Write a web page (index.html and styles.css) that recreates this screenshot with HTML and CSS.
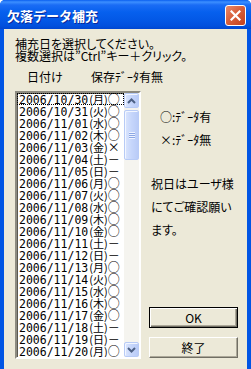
FILE: index.html
```html
<!DOCTYPE html>
<html lang="ja">
<head>
    <meta charset="UTF-8">
    <title>欠落データ補充</title>
    <link rel="stylesheet" href="styles.css">
</head>
<body>
    <div class="window">
        <div class="titlebar">
            <span class="title">欠落データ補充</span>
            <div class="close-btn">
                <svg width="11" height="11" viewBox="0 0 11 11"><path d="M1.5 1.5 L9.5 9.5 M9.5 1.5 L1.5 9.5" stroke="#fff" stroke-width="2.2" stroke-linecap="square"/></svg>
            </div>
        </div>

        <div class="client">
            <div class="intro">
                <div>補充日を選択してください。</div>
                <div>複数選択は”Ctrl”キー＋クリック。</div>
            </div>

            <div class="headers">
                <span class="h-date">日付け</span>
                <span>保存ﾃﾞｰﾀ有無</span>
            </div>

            <div class="main">
                <div class="listbox">
                    <ul class="items">
                        <li class="focused"><span class="dt">2006/10/30</span><span class="wd">(月)</span><span class="mk">○</span></li>
                        <li><span class="dt">2006/10/31</span><span class="wd">(火)</span><span class="mk">○</span></li>
                        <li><span class="dt">2006/11/01</span><span class="wd">(水)</span><span class="mk">○</span></li>
                        <li><span class="dt">2006/11/02</span><span class="wd">(木)</span><span class="mk">○</span></li>
                        <li><span class="dt">2006/11/03</span><span class="wd">(金)</span><span class="mk">×</span></li>
                        <li><span class="dt">2006/11/04</span><span class="wd">(土)</span><span class="mk">－</span></li>
                        <li><span class="dt">2006/11/05</span><span class="wd">(日)</span><span class="mk">－</span></li>
                        <li><span class="dt">2006/11/06</span><span class="wd">(月)</span><span class="mk">○</span></li>
                        <li><span class="dt">2006/11/07</span><span class="wd">(火)</span><span class="mk">○</span></li>
                        <li><span class="dt">2006/11/08</span><span class="wd">(水)</span><span class="mk">○</span></li>
                        <li><span class="dt">2006/11/09</span><span class="wd">(木)</span><span class="mk">○</span></li>
                        <li><span class="dt">2006/11/10</span><span class="wd">(金)</span><span class="mk">○</span></li>
                        <li><span class="dt">2006/11/11</span><span class="wd">(土)</span><span class="mk">－</span></li>
                        <li><span class="dt">2006/11/12</span><span class="wd">(日)</span><span class="mk">－</span></li>
                        <li><span class="dt">2006/11/13</span><span class="wd">(月)</span><span class="mk">○</span></li>
                        <li><span class="dt">2006/11/14</span><span class="wd">(火)</span><span class="mk">○</span></li>
                        <li><span class="dt">2006/11/15</span><span class="wd">(水)</span><span class="mk">○</span></li>
                        <li><span class="dt">2006/11/16</span><span class="wd">(木)</span><span class="mk">○</span></li>
                        <li><span class="dt">2006/11/17</span><span class="wd">(金)</span><span class="mk">○</span></li>
                        <li><span class="dt">2006/11/18</span><span class="wd">(土)</span><span class="mk">－</span></li>
                        <li><span class="dt">2006/11/19</span><span class="wd">(日)</span><span class="mk">－</span></li>
                        <li><span class="dt">2006/11/20</span><span class="wd">(月)</span><span class="mk">○</span></li>
                    </ul>
                    <div class="scrollbar">
                        <div class="sb-btn">
                            <svg width="9" height="6" viewBox="0 0 9 6"><path d="M1 5 L4.5 1.5 L8 5" fill="none" stroke="#4d6185" stroke-width="2"/></svg>
                        </div>
                        <div class="sb-thumb">
                            <div class="grip"></div>
                        </div>
                        <div class="sb-track"></div>
                        <div class="sb-btn">
                            <svg width="9" height="6" viewBox="0 0 9 6"><path d="M1 1 L4.5 4.5 L8 1" fill="none" stroke="#4d6185" stroke-width="2"/></svg>
                        </div>
                    </div>
                </div>

                <div class="side">
                    <div class="legend">
                        <div>○:ﾃﾞｰﾀ有</div>
                        <div>×:ﾃﾞｰﾀ無</div>
                    </div>
                    <div class="note">祝日はユーザ様<br>にてご確認願い<br>ます。</div>
                    <div class="buttons">
                        <button class="btn btn-default">OK</button>
                        <button class="btn">終了</button>
                    </div>
                </div>
            </div>
        </div>
    </div>
</body>
</html>
```

FILE: styles.css
```css
body {
    margin: 0;
    background: #fff;
    font-family: 'Noto Sans CJK JP', sans-serif;
    font-size: 12px;
    color: #000;
}
.window {
    width: 251px;
    height: 369px;
    background: #0155e4;
    border-radius: 5px 5px 0 0;
    display: flex;
    flex-direction: column;
    box-sizing: border-box;
    overflow: hidden;
}
.titlebar {
    height: 29px;
    flex: none;
    display: flex;
    align-items: center;
    padding: 0 5px 0 7px;
    background: linear-gradient(#0a5ff0 0, #3c8fff 2px, #1a6cf5 5px, #0660ee 12px, #0358e6 20px, #0150dd 26px, #0046d0 29px);
}
.title {
    color: #fff;
    font-weight: bold;
    font-size: 13px;
    line-height: 13px;
    margin-top: 1px;
    text-shadow: 1px 1px 0 #0a2a9a;
}
.close-btn {
    margin-left: auto;
    width: 19px;
    height: 19px;
    border: 1px solid #fff;
    border-radius: 3px;
    background: linear-gradient(135deg, #e98a6c 0%, #d8603c 45%, #c4401c 100%);
    display: flex;
    align-items: center;
    justify-content: center;
    margin-top: 1px;
}
.client {
    flex: 1;
    margin: 0 4px 4px 4px;
    background: #ece9d8;
    padding: 9px 9px 10px 11px;
    display: flex;
    flex-direction: column;
    font-feature-settings: "palt";
}
.intro {
    line-height: 12px;
}
.headers {
    margin-top: 9px;
    line-height: 12px;
    padding-left: 12px;
    display: flex;
}
.h-date {
    width: 64px;
}
.main {
    margin-top: 8px;
    flex: 1;
    display: flex;
    gap: 8px;
}
.listbox {
    width: 128px;
    box-sizing: border-box;
    border: 2px solid;
    border-color: #8d8b80 #fff #fff #8d8b80;
    box-shadow: inset 1px 1px 0 #5a5850;
    background: #fff;
    display: flex;
    overflow: hidden;
}
.items {
    list-style: none;
    margin: 0;
    padding: 0;
    flex: 1;
    overflow: hidden;
    font-feature-settings: normal;
}
.items li {
    height: 12px;
    line-height: 12px;
    white-space: nowrap;
    padding-left: 2px;
    box-sizing: border-box;
}
.items li.focused {
    outline: 1px dotted #000;
    outline-offset: -1px;
}
.dt {
    font-family: 'DejaVu Sans Mono', monospace;
    font-size: 11.5px;
}
.wd {
    font-size: 11px;
    margin-left: 1px;
}
.mk {
    font-size: 12px;
}
.scrollbar {
    width: 15px;
    flex: none;
    display: flex;
    flex-direction: column;
    background: #f5f4ef;
}
.sb-btn,
.sb-thumb {
    box-sizing: border-box;
    border: 1px solid #b8cbf6;
    border-radius: 2px;
    background: linear-gradient(90deg, #dbe5fd 0%, #c6d6fb 50%, #b9cbf7 100%);
    box-shadow: inset 1px 1px 0 #f2f6ff;
}
.sb-btn {
    height: 15px;
    display: flex;
    align-items: center;
    justify-content: center;
}
.sb-thumb {
    height: 50px;
    margin-top: 2px;
    display: flex;
    align-items: center;
    justify-content: center;
}
.grip {
    width: 6px;
    height: 7px;
    background: repeating-linear-gradient(#eef3ff 0, #eef3ff 1px, #8ca7e4 1px, #8ca7e4 2px);
}
.sb-track {
    flex: 1;
}
.side {
    flex: 1;
    display: flex;
    flex-direction: column;
}
.legend {
    margin-top: 14px;
    padding-left: 11px;
    line-height: 23px;
}
.note {
    margin-top: 21px;
    padding-left: 2px;
    line-height: 23px;
}
.buttons {
    margin-top: auto;
    margin-bottom: 1px;
    display: flex;
    flex-direction: column;
    gap: 9px;
}
.btn {
    width: 89px;
    height: 21px;
    padding: 0;
    font-family: 'Noto Sans CJK JP', sans-serif;
    font-size: 12px;
    color: #000;
    background: #ece9d8;
    border: 1px solid;
    border-color: #fff #716f64 #716f64 #fff;
    box-shadow: inset -1px -1px 0 #aca899;
}
.btn-default {
    border: 1px solid #000;
    box-shadow: inset 1px 1px 0 #fff, inset -1px -1px 0 #716f64, inset -2px -2px 0 #aca899;
}
```
